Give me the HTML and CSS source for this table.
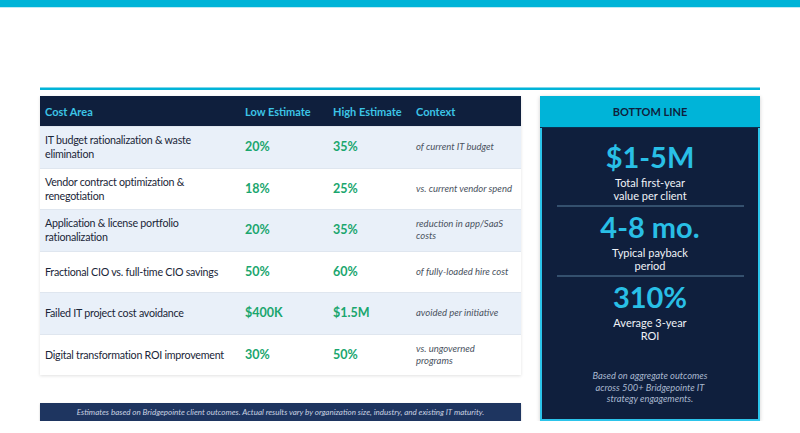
FILE: index.html
```html
<!DOCTYPE html>
<html>
<head>
<meta charset="utf-8">
<link rel="stylesheet" href="styles.css">
</head>
<body>
<div class="topbar"></div>
<div class="page">
  <div class="rule"></div>
  <div class="main">
    <div class="left">
      <table class="costs">
        <thead>
          <tr><th class="c1">Cost Area</th><th class="c2">Low Estimate</th><th class="c3">High Estimate</th><th class="c4">Context</th></tr>
        </thead>
        <tbody>
          <tr class="alt"><td>IT budget rationalization &amp; waste elimination</td><td class="num">20%</td><td class="num">35%</td><td class="ctx">of current IT budget</td></tr>
          <tr><td>Vendor contract optimization &amp; renegotiation</td><td class="num">18%</td><td class="num">25%</td><td class="ctx">vs. current vendor spend</td></tr>
          <tr class="alt"><td>Application &amp; license portfolio rationalization</td><td class="num">20%</td><td class="num">35%</td><td class="ctx">reduction in app/SaaS costs</td></tr>
          <tr><td>Fractional CIO vs. full-time CIO savings</td><td class="num">50%</td><td class="num">60%</td><td class="ctx">of fully-loaded hire cost</td></tr>
          <tr class="alt"><td>Failed IT project cost avoidance</td><td class="num">$400K</td><td class="num">$1.5M</td><td class="ctx">avoided per initiative</td></tr>
          <tr><td>Digital transformation ROI improvement</td><td class="num">30%</td><td class="num">50%</td><td class="ctx">vs. ungoverned<br>programs</td></tr>
        </tbody>
      </table>
      <div class="note">Estimates based on Bridgepointe client outcomes. Actual results vary by organization size, industry, and existing IT maturity.</div>
    </div>
    <div class="panel">
      <div class="panel-head">BOTTOM LINE</div>
      <div class="panel-body">
        <div class="stat">
          <div class="big">$1-5M</div>
          <div class="lbl">Total first-year<br>value per client</div>
        </div>
        <div class="divider"></div>
        <div class="stat">
          <div class="big">4-8 mo.</div>
          <div class="lbl">Typical payback<br>period</div>
        </div>
        <div class="divider"></div>
        <div class="stat">
          <div class="big">310%</div>
          <div class="lbl">Average 3-year<br>ROI</div>
        </div>
        <div class="fine">Based on aggregate outcomes across 500+ Bridgepointe IT strategy engagements.</div>
      </div>
    </div>
  </div>
</div>
</body>
</html>
```

FILE: styles.css
```css
html, body {
  margin: 0;
  padding: 0;
  background: #ffffff;
  font-family: Lato, "Open Sans", sans-serif;
}
.topbar {
  height: 7px;
  background: #00b4d8;
  border-bottom: 1px solid #bfeaf4;
}
.page {
  padding: 79px 40px 0 40px;
}
.rule {
  height: 3px;
  background: #00b4d8;
  border-top: 1px solid #7fd6ea;
  box-sizing: border-box;
}
.main {
  display: flex;
  gap: 19px;
  margin-top: 6px;
}
.left {
  width: 481px;
  display: flex;
  flex-direction: column;
}
.costs {
  width: 481px;
  border-collapse: collapse;
  table-layout: fixed;
  box-shadow: 0 1px 3px rgba(0,0,0,0.12);
}
.costs th {
  background: #0f1f3d;
  color: #3cc4e6;
  font-weight: 700;
  font-size: 11px;
  text-align: left;
  height: 30px;
  padding: 0 0 0 5px;
}
.costs th.c1 { width: 195px; }
.costs th.c2 { width: 83px; }
.costs th.c3 { width: 78px; }
.costs td {
  height: 40.5px;
  padding: 0 0 0 5px;
  font-size: 10.7px;
  letter-spacing: -0.25px;
  line-height: 14px;
  color: #1a2638;
  border-top: 1.5px solid #dfe6ef;
  background: #ffffff;
}
.costs tr.alt td { background: #e9f0f9; }
.costs td.num {
  color: #1aa66e;
  font-weight: 700;
  font-size: 12.5px;
  letter-spacing: 0;
}
.costs td.ctx {
  font-style: italic;
  font-size: 9.5px;
  letter-spacing: 0;
  line-height: 12px;
  color: #4a5260;
  padding-right: 2px;
}
.note {
  margin-top: 28px;
  height: 18px;
  background: #1e3560;
  color: #c9d2e0;
  font-style: italic;
  font-size: 8px;
  display: flex;
  align-items: center;
  justify-content: center;
  box-shadow: 0 1px 2px rgba(0,0,0,0.2);
}
.panel {
  width: 221px;
  height: 325px;
  display: flex;
  flex-direction: column;
  box-shadow: 0 1px 4px rgba(0,0,0,0.2);
}
.panel-head {
  height: 31px;
  background: #00b4d8;
  color: #0f1f3d;
  font-weight: 700;
  font-size: 11px;
  display: flex;
  align-items: center;
  justify-content: center;
  border-bottom: 1px solid #0a3050;
}
.panel-body {
  flex: 1;
  background: #0f1f3d;
  border: 2px solid #2cc4ea;
  border-top: none;
  display: flex;
  flex-direction: column;
  align-items: center;
  padding-top: 12px;
}
.stat {
  display: flex;
  flex-direction: column;
  align-items: center;
}
.big {
  color: #29bfe6;
  font-weight: 700;
  font-size: 29px;
  line-height: 34px;
}
.lbl {
  color: #f0f3f8;
  font-size: 11px;
  line-height: 13px;
  text-align: center;
  margin-top: 2px;
}
.divider {
  width: 187px;
  height: 2px;
  background: #34506e;
  margin: 3px 0 3px 0;
}
.fine {
  margin-top: 28px;
  width: 128px;
  text-align: center;
  color: #a9b8cf;
  font-style: italic;
  font-size: 9.3px;
  line-height: 11.5px;
}
```
